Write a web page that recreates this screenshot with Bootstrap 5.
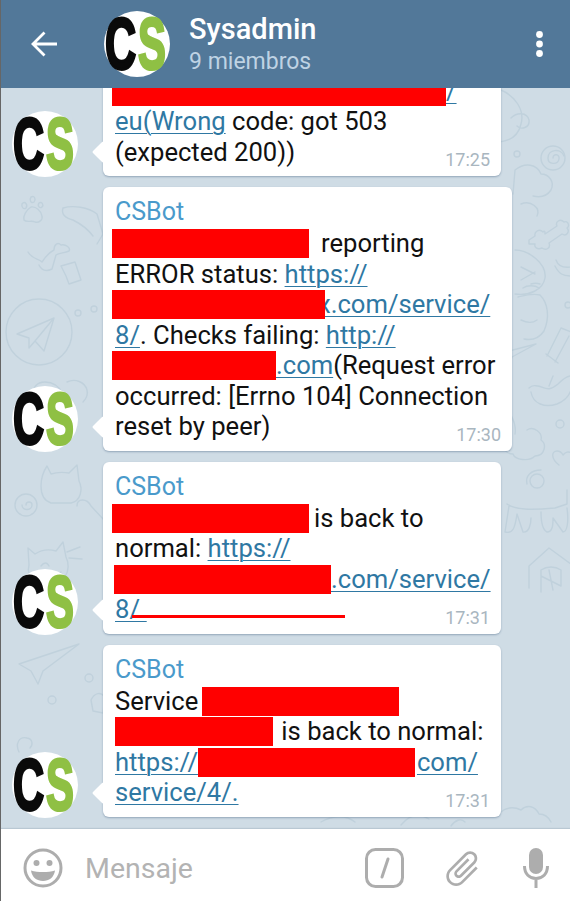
<!DOCTYPE html>
<html lang="es">
<head>
  <meta charset="UTF-8" />
  <meta name="viewport" content="width=device-width, initial-scale=1.0"/>
  <title>Sysadmin</title>
  <link href="https://cdn.jsdelivr.net/npm/bootstrap@5.3.0/dist/css/bootstrap.min.css" rel="stylesheet">
  <style>
    html, body { height: 100%; }
    body {
      font-family: Roboto, "Liberation Sans", sans-serif;
      background: #fff;
      overflow: hidden;
    }
    .app-shell { height: 901px; border-left: 1px solid #666; }
    .top-bar {
      height: 88px;
      background: #527899;
      color: #fff;
      flex-shrink: 0;
      z-index: 2;
    }
    .back-btn { width: 86px; padding-left: 30px; }
    .top-avatar { margin: 0 19px 0 17px; }
    .chat-title { font-size: 29px; font-weight: 500; line-height: 33px; }
    .chat-sub { font-size: 23px; line-height: 32px; color: #bfd3e4; }
    .more-btn { padding-right: 27px; }
    .top-text { padding-top: 3px; }

    .chat-area {
      flex: 1 1 auto;
      min-height: 0;
      overflow: hidden;
      background: #cfdce5;
      padding: 0 0 12px 11px;
      gap: 11px;
    }
    .wallpaper { left: 0; top: 0; width: 570px; height: 741px; }
    .wallpaper * { fill: none; stroke: #c0d1dc; stroke-width: 1.4; stroke-linecap: round; stroke-linejoin: round; }

    .msg-row { gap: 25px; flex-shrink: 0; z-index: 1; }
    .msg-row > .cs-logo { margin-bottom: -1px; }
    .bubble {
      background: #fff;
      border-radius: 6px;
      box-shadow: 0 1px 2px rgba(70, 100, 130, .45);
      padding: 10px 0 9px 12px;
      font-size: 25.6px;
      line-height: 30.6px;
      color: #111;
      white-space: nowrap;
    }
    .bubble::before {
      content: "";
      position: absolute;
      left: -8px;
      bottom: 16px;
      width: 16px;
      height: 16px;
      background: #fff;
      transform: rotate(45deg);
      border-radius: 2px;
      clip-path: polygon(0 0, 0 100%, 100% 100%);
    }
    .bubble-sm { width: 398px; }
    .bubble-lg { width: 409px; }
    .sender { color: #4a9acb; font-size: 25px; }
    .bubble a { color: #2f78a3; text-decoration: underline; text-underline-offset: 3px; text-decoration-thickness: 1px; }
    .stamp {
      position: absolute;
      right: 11px;
      bottom: 4px;
      font-size: 18px;
      line-height: 24px;
      color: #a9b6bf;
    }
    .redact {
      display: inline-block;
      position: relative;
      z-index: 1;
      height: 29px;
      background: #f00;
      vertical-align: -6px;
    }
    .lead-in { margin-left: -3px; }
    .pull-in { margin-left: -1px; }
    .pull-more { margin-left: -3px; }
    .tuck { margin-left: -7px; }
    .rd-334 { width: 334px; }
    .rd-197 { width: 197px; }
    .rd-213 { width: 213px; }
    .rd-164 { width: 164px; }
    .rd-217 { width: 217px; }
    .rd-158 { width: 158px; }
    .gap-a { margin-left: 12px; }
    .gap-b { margin-left: 5px; }
    .gap-c { margin-left: 2px; }
    .scratch {
      position: absolute;
      left: 29px;
      bottom: 16px;
      width: 213px;
      height: 3px;
      background: #f00;
    }

    .cs-logo {
      width: 66px;
      height: 66px;
      flex-shrink: 0;
      border-radius: 50%;
      background: #fff;
      font-family: "Liberation Sans", sans-serif;
      font-weight: 700;
      font-size: 72px;
      line-height: 66px;
    }
    .cs-logo span { display: block; width: 33px; transform-origin: 0 50%; -webkit-text-stroke: 3px currentColor; }
    .cs-c { color: #0a0a0a; margin-left: 1px; transform: scaleX(.6); }
    .cs-s { color: #8fc044; transform: scaleX(.58); }

    .composer {
      height: 72px;
      flex-shrink: 0;
      background: #fff;
      box-shadow: 0 -1px 1px rgba(120, 140, 160, .25);
      z-index: 2;
      padding: 6px 0 0 22px;
    }
    .msg-input { font-size: 28.5px; color: #b3b3b3; margin: 3px 0 0 22px; }
    .tool-icon { fill: none; stroke: #adadad; stroke-width: 3; flex-shrink: 0; }
    .tool-fill { fill: #adadad; stroke: none; }
    .tool-slash { margin-right: 37px; }
    .tool-clip { margin-right: 39px; }
    .tool-mic { margin-right: 21px; }
  </style>
</head>
<body>
  <div class="app-shell d-flex flex-column">
    <nav class="top-bar d-flex align-items-center position-relative">
      <div class="back-btn d-flex align-items-center">
        <svg width="26" height="26" viewBox="0 0 26 26" fill="none" stroke="#fff" stroke-width="2.8"><path d="M26 13H2M13.5 1.5 2 13l11.5 11.5"/></svg>
      </div>
      <div class="cs-logo top-avatar d-flex"><span class="cs-c">C</span><span class="cs-s">S</span></div>
      <div class="top-text flex-grow-1">
        <div class="chat-title">Sysadmin</div>
        <div class="chat-sub">9 miembros</div>
      </div>
      <div class="more-btn">
        <svg width="7" height="26" viewBox="0 0 7 26" fill="#fff"><circle cx="3.5" cy="3.5" r="3.4"/><circle cx="3.5" cy="13" r="3.4"/><circle cx="3.5" cy="22.5" r="3.4"/></svg>
      </div>
    </nav>

    <main class="chat-area d-flex flex-column justify-content-end position-relative">
      <svg class="wallpaper position-absolute" viewBox="0 88 570 741">
        <path d="M30 207c-5 3-8 9-7 13 2 3 8 0 11 2 4 1 8-2 7-6-1-5-6-10-11-9zM21 204c3-4 6 1 4 4-2 2-5-1-4-4zM30 197c4-2 5 3 3 5-3 2-5-2-3-5zM38 203c3-2 5 2 3 4-2 2-5-1-3-4z"/>
        <path d="M62 208c10-3 25-1 34 6l6 20-6 10M62 208c-2 6 2 10 10 12 6 3 14 8 20 16"/>
        <path d="M27 252c5 8 10 6 14 10 4-6 8-10 12-12 0-6 4-8 7-5 5-1 10 3 8 6-5 2-10 2-13 4l-4 14c-6 3-10 2-13-4"/>
        <path d="M60 266l14-4 6 18-12 4-3-8z"/>
        <circle cx="38" cy="332" r="33"/>
        <path d="M16 334l37-16-10 33-9-10-6 7v-10zM53 318l-19 23"/>
        <circle cx="77" cy="313" r="3"/><circle cx="93" cy="309" r="3"/>
        <path d="M34 396c-4-8 2-14 10-14 8 0 14 4 18 12M66 382c8-4 18 0 20 8 1 4 0 8-4 12"/>
        <path d="M40 486c0-8 2-14 6-20l4 8c6-2 12-2 18-1l8-8 2 16c4 8 2 20-8 22H50c-6-2-10-8-10-17z"/>
        <circle cx="25" cy="505" r="11"/><path d="M25 505c0-4 6-4 6 0 0 6-10 6-10 0"/>
        <path d="M76 506c0-8 10-8 14 0l13 14"/>
        <path d="M28 565l-1-17 7 6c6-4 14-5 21-3l7-9 3 15c3 6 3 14-1 20-7 9-20 10-29 5-6-4-9-10-7-17zM66 552l13-5M68 558l13 1M40 566c3-4 6-4 8 0M48 572c4 4 8 4 12 0"/>
        <path d="M18 664l60-20-36 27-5 13-7-13zM42 671l-5 13"/>
        <circle cx="51" cy="700" r="4"/><circle cx="88" cy="678" r="4"/>
        <path d="M18 752c-4-8 0-16 8-14 6 1 6 7 3 10M90 700c4-8 10-8 14-3l-2 16-10-2z"/>
        <path d="M500 90c14 6 24 20 20 34-3 14-14 18-26 18M510 118c6-6 16-6 18 2 1 8-8 10-12 6"/>
        <circle cx="552" cy="158" r="12"/><path d="M552 158c0-5 7-4 6 1-1 6-11 6-11-1 0-9 13-10 16-2"/><circle cx="516" cy="154" r="3"/>
        <path d="M514 170c10-8 22-6 26 4 8 0 14 8 10 16-4 6-10 8-18 6M520 204c10-4 20 4 16 12M514 170l-2 24"/>
        <path d="M528 240l6-4c-1-4 4-8 8-4 2-2 2 0 2 2l12-8c-2-4 3-8 7-4 4-2 6 4 3 6 3 3 0 9-5 6l-13 9c2 5-3 8-7 5-5 2-8-1-7-4h-6z"/>
        <path d="M514 250c14 0 32 14 30 28-2 12-16 18-30 16M520 267l14 7M520 280l14-8"/>
        <path d="M555 260c2 6 8 8 15 7M554 266c4 8 8 10 16 10"/>
        <circle cx="567" cy="305" r="3"/>
        <path d="M517 297c8-2 14-4 22-2 8 8 10 22 4 36-4 6-10 10-20 8M522 288c4-3 12-3 16 0M530 284c3-1 6-1 9 0M520 320c6 3 12 3 16 0"/>
        <path d="M546 356l14-28 10 4M554 362l14-26M545 354l12 9"/>
        <path d="M500 353l35-9-24 13-3 9-5-8z"/>
        <path d="M528 388c4-4 6-2 9-2 8 2 10 6 20-2 6-6 10-8 13-8M530 392c2 12 14 16 26 12 8-3 12-8 14-14M548 386l4-10"/>
        <circle cx="559" cy="424" r="4"/>
        <path d="M500 404c8 6 16 18 14 30M504 440c-4 6 0 14 8 14 2 6 16 8 22 2 10 0 12-12 6-16 2-8-8-14-14-10"/>
        <path d="M558 465c-8-6-8-14-2-14 4 0 5 2 6 4 2-3 6-4 8-2"/>
        <circle cx="536" cy="481" r="7"/><path d="M526 484c-2-8 4-14 14-14"/>
        <path d="M506 504c8 6 24 6 48 4l12-4v-14M508 506l-4 26c8 2 10-4 12-18l6 18c6 1 8-8 8-14M540 512c0 10 2 18 6 20 6 0 6-8 6-14l10 14c4 0 6-10 4-24"/>
        <path d="M528 588v-22l20-18 22 16M540 592v-22c6-4 14-4 20 0v16M540 576l20 10M548 570l4 20"/>
        <path d="M500 812c4-4 12-6 20-2 6-6 14-4 18 4 6 0 10 4 12 8"/>
        <path d="M320 822c10-6 24-8 34 0M400 825c8-10 18-12 28-6M450 826c4-6 10-8 14-4"/>
      </svg>

      <div class="msg-row d-flex align-items-end position-relative">
        <div class="cs-logo d-flex"><span class="cs-c">C</span><span class="cs-s">S</span></div>
        <div class="bubble bubble-sm position-relative">
          <span class="redact rd-334 lead-in"></span><a href="#">/</a><br>
          <a href="#">eu(Wrong</a> code: got 503<br>
          (expected 200))
          <span class="stamp">17:25</span>
        </div>
      </div>

      <div class="msg-row d-flex align-items-end position-relative">
        <div class="cs-logo d-flex"><span class="cs-c">C</span><span class="cs-s">S</span></div>
        <div class="bubble bubble-lg position-relative">
          <div class="sender">CSBot</div>
          <span class="redact rd-197 lead-in"></span><span class="gap-a">reporting</span><br>
          ERROR status: <a href="#">https://</a><br>
          <span class="redact rd-213 lead-in"></span><a class="tuck" href="#">x.com/service/</a><br>
          <a href="#">8/</a>. Checks failing: <a href="#">http://</a><br>
          <span class="redact rd-164 lead-in"></span><a href="#">.com</a>(Request error<br>
          occurred: [Errno 104] Connection<br>
          reset by peer)
          <span class="stamp">17:30</span>
        </div>
      </div>

      <div class="msg-row d-flex align-items-end position-relative">
        <div class="cs-logo d-flex"><span class="cs-c">C</span><span class="cs-s">S</span></div>
        <div class="bubble bubble-sm position-relative">
          <div class="sender">CSBot</div>
          <span class="redact rd-197 lead-in"></span><span class="gap-b">is back to</span><br>
          normal: <a href="#">https://</a><br>
          <span class="redact rd-217 pull-in"></span><a href="#">.com/service/</a><br>
          <a href="#">8/.</a>
          <span class="scratch"></span>
          <span class="stamp">17:31</span>
        </div>
      </div>

      <div class="msg-row d-flex align-items-end position-relative">
        <div class="cs-logo d-flex"><span class="cs-c">C</span><span class="cs-s">S</span></div>
        <div class="bubble bubble-sm position-relative">
          <div class="sender">CSBot</div>
          Service <span class="redact rd-197 pull-more"></span><br>
          <span class="redact rd-158"></span><span class="gap-c"> is back to normal:</span><br>
          <a href="#">https://</a><span class="redact rd-217"></span><a class="gap-c" href="#">com/</a><br>
          <a href="#">service/4/.</a>
          <span class="stamp">17:31</span>
        </div>
      </div>
    </main>

    <footer class="composer d-flex align-items-center position-relative">
      <svg class="tool-icon" width="40" height="40" viewBox="0 0 40 40">
        <circle cx="20" cy="20" r="18"/>
        <circle class="tool-fill" cx="13.5" cy="15" r="3"/>
        <circle class="tool-fill" cx="26.5" cy="15" r="3"/>
        <path class="tool-fill" d="M8 22.5c7 2 17 2 24 0-1 7-6 10.500-12 10.500S9 29.500 8 22.500z"/>
      </svg>
      <div class="msg-input flex-grow-1">Mensaje</div>
      <svg class="tool-icon tool-slash" width="39" height="40" viewBox="0 0 39 40">
        <rect x="1.500" y="1.500" width="36" height="37" rx="9"/>
        <path d="M23 11l-6 18" stroke-linecap="round"/>
      </svg>
      <svg class="tool-clip" width="43" height="43" viewBox="0 0 24 24" fill="#adadad">
        <path transform="rotate(45 12 12)" d="M16.5 6v11.500c0 2.210-1.790 4-4 4s-4-1.790-4-4V5c0-1.380 1.120-2.500 2.500-2.500s2.500 1.120 2.500 2.500v10.500c0 .55-.45 1-1 1s-1-.45-1-1V6H10v9.500c0 1.380 1.120 2.500 2.500 2.500s2.500-1.120 2.500-2.500V5c0-2.210-1.790-4-4-4S7 2.790 7 5v12.500c0 3.040 2.460 5.500 5.500 5.500s5.500-2.460 5.500-5.500V6h-1.500z"/>
      </svg>
      <svg class="tool-mic" width="26" height="40" viewBox="0 0 26 40">
        <rect x="6" y="0" width="14" height="26" rx="7" fill="#adadad"/>
        <path d="M1.500 18c0 8 5 12.500 11.500 12.500S24.500 26 24.500 18M13 30v10" fill="none" stroke="#adadad" stroke-width="3"/>
      </svg>
    </footer>
  </div>

  <script src="https://cdn.jsdelivr.net/npm/bootstrap@5.3.0/dist/js/bootstrap.bundle.min.js"></script>
</body>
</html>
